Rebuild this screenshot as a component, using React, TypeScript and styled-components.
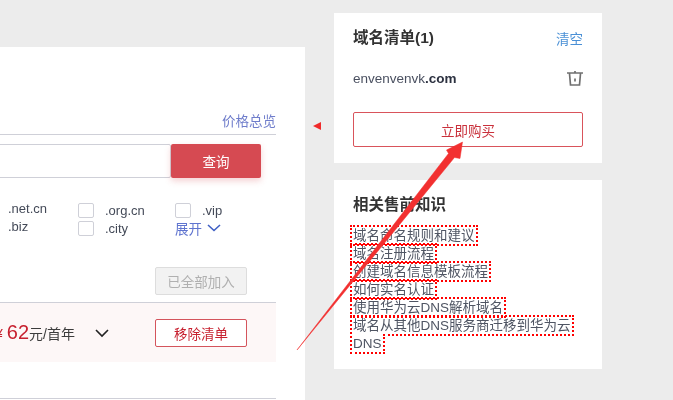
import React from "react";
import styled, { createGlobalStyle } from "styled-components";

const Global = createGlobalStyle`
  html, body { margin: 0; padding: 0; width: 673px; height: 400px; overflow: hidden; background: #ececec; }
  body { font-family: "Liberation Sans", "Noto Sans CJK SC", sans-serif; color: #333; }
`;

const Page = styled.div`
  position: relative;
  width: 673px;
  height: 400px;
  overflow: hidden;
  display: flex;
  align-items: flex-start;
  background: #ececec;
  filter: blur(0.4px);
`;

const MainPanel = styled.main`
  width: 305px;
  height: 353px;
  margin-top: 47px;
  padding: 65px 29px 0 0;
  box-sizing: border-box;
  background: #fff;
  overflow: hidden;
  flex: none;
`;

const PriceBar = styled.div`
  height: 22px;
  border-bottom: 1px solid #cfd0d8;
  display: flex;
  justify-content: flex-end;
  align-items: flex-start;
  font-size: 13.5px;
  line-height: 20px;
  color: #6f7dcb;
`;

const SearchRow = styled.div`
  display: flex;
  height: 34px;
  margin: 9px 15px 0 0;
`;

const SearchInput = styled.div`
  flex: 1;
  margin-left: -3px;
  box-sizing: border-box;
  background: #fff;
  border: 1px solid #cfd0d8;
  border-radius: 2px;
`;

const SearchButton = styled.button`
  width: 90px;
  border: 0;
  border-radius: 2px;
  background: #d64a52;
  color: #fff;
  font: inherit;
  font-size: 13.5px;
  padding: 0;
  box-shadow: 0 3px 6px rgba(214, 74, 82, 0.25);
`;

const TldGrid = styled.div`
  display: grid;
  grid-template-columns: 70px 97px 97px;
  grid-auto-rows: 18px;
  margin: 23px 0 0 8px;
  font-size: 13px;
  color: #444a58;
`;

const Tld = styled.label`
  display: flex;
  align-items: center;
  gap: 11px;
`;

const CheckBox = styled.span`
  width: 14px;
  height: 13px;
  flex: none;
  border: 1px solid #cfd0d8;
  border-radius: 2px;
  background: #fff;
`;

const Expand = styled.span`
  display: flex;
  align-items: center;
  gap: 5px;
  font-size: 13.5px;
  color: #5f74cf;
`;

const ActionRow = styled.div`
  display: flex;
  justify-content: flex-end;
  margin: 30px 29px 0 0;
`;

const Disabled = styled.button`
  width: 92px;
  height: 28px;
  padding: 0;
  box-sizing: border-box;
  border: 1px solid #ddd;
  border-radius: 2px;
  background: #f2f2f2;
  color: #b0b0b0;
  font: inherit;
  font-size: 13.5px;
`;

const ResultRow = styled.div`
  height: 60px;
  margin-top: 7px;
  box-sizing: border-box;
  border-top: 1px solid #cfd0d8;
  background: #fdf7f7;
  display: flex;
  justify-content: flex-end;
  align-items: center;
  padding-right: 29px;
`;

const Price = styled.span`
  display: flex;
  flex: none;
  align-items: baseline;
  margin-right: 20px;
  font-size: 14px;
  color: #3c3c3c;
  white-space: nowrap;
`;

const Currency = styled.span`
  margin-right: 4px;
  color: #c7202f;
`;

const Amount = styled.b`
  font-weight: 400;
  font-size: 20px;
  color: #c7202f;
`;

const Chevron = styled.svg`
  width: 14px;
  height: 10px;
  margin-right: 46px;
  flex: none;
`;

const Remove = styled.button`
  width: 92px;
  height: 28px;
  flex: none;
  padding: 0;
  box-sizing: border-box;
  border: 1px solid #d4545c;
  border-radius: 2px;
  background: #fff;
  color: #c7202f;
  font: inherit;
  font-size: 13.5px;
`;

const BottomLine = styled.div`
  height: 36px;
  border-bottom: 1px solid #cfd0d8;
`;

const Pointer = styled.div`
  width: 0;
  height: 0;
  flex: none;
  margin: 122px 0 0 8px;
  border-style: solid;
  border-width: 4px 8px 4px 0;
  border-color: transparent #f02a2a transparent transparent;
`;

const Side = styled.aside`
  width: 268px;
  flex: none;
  margin: 13px 0 0 13px;
  display: flex;
  flex-direction: column;
  gap: 17px;
`;

const Card = styled.section`
  background: #fff;
  padding: 16px 19px 0;
  box-sizing: border-box;
  height: ${(p: { $h: number }) => p.$h}px;
`;

const CardHead = styled.div`
  display: flex;
  justify-content: space-between;
  align-items: center;
  height: 18px;
`;

const Title = styled.h3`
  margin: 0;
  font-size: 15.5px;
  line-height: 18px;
  font-weight: 700;
  color: #333;
`;

const Clear = styled.span`
  font-size: 13.5px;
  color: #4a90d6;
`;

const ItemRow = styled.div`
  display: flex;
  justify-content: space-between;
  align-items: center;
  height: 18px;
  margin-top: 22px;
  font-size: 13.5px;
  color: #4a5060;
`;

const Tail = styled.b`
  font-weight: 700;
  color: #2c3140;
`;

const Buy = styled.button`
  display: block;
  width: 230px;
  height: 35px;
  margin-top: 25px;
  padding: 0;
  box-sizing: border-box;
  border: 1px solid #d9535b;
  border-radius: 2px;
  background: #fff;
  color: #c9303b;
  font: inherit;
  font-size: 13.5px;
`;

const Links = styled.div`
  margin-top: 13px;
  font-size: 13.5px;
  line-height: 18px;
  color: #4f5563;
`;

const DocLink = styled.a`
  outline: 2px dotted #f00;
  outline-offset: 1px;
`;

const Arrow = styled.svg`
  position: absolute;
  left: 0;
  top: 0;
  width: 673px;
  height: 400px;
  pointer-events: none;
`;

const links = [
  "域名命名规则和建议",
  "域名注册流程",
  "创建域名信息模板流程",
  "如何实名认证",
  "使用华为云DNS解析域名",
  "域名从其他DNS服务商迁移到华为云DNS",
];

export default function App() {
  return (
    <Page>
      <Global />
      <MainPanel>
        <PriceBar>价格总览</PriceBar>
        <SearchRow>
          <SearchInput />
          <SearchButton>查询</SearchButton>
        </SearchRow>
        <TldGrid>
          <span>.net.cn</span>
          <Tld><CheckBox />.org.cn</Tld>
          <Tld><CheckBox />.vip</Tld>
          <span>.biz</span>
          <Tld><CheckBox />.city</Tld>
          <Expand>
            展开
            <svg width="14" height="8" viewBox="0 0 14 8">
              <path d="M1 1l6 5.5L13 1" fill="none" stroke="#3f5fc4" strokeWidth="1.6" />
            </svg>
          </Expand>
        </TldGrid>
        <ActionRow>
          <Disabled>已全部加入</Disabled>
        </ActionRow>
        <ResultRow>
          <Price>
            <Currency>¥</Currency>
            <Amount>62</Amount>元/首年
          </Price>
          <Chevron viewBox="0 0 14 10">
            <path d="M1 2l6 6 6-6" fill="none" stroke="#222" strokeWidth="1.6" />
          </Chevron>
          <Remove>移除清单</Remove>
        </ResultRow>
        <BottomLine />
      </MainPanel>
      <Pointer />
      <Side>
        <Card $h={150}>
          <CardHead>
            <Title>域名清单(1)</Title>
            <Clear>清空</Clear>
          </CardHead>
          <ItemRow>
            <span>envenvenvk<Tail>.com</Tail></span>
            <svg width="16" height="16" viewBox="0 0 16 16">
              <path
                d="M0 3h16M8 1v2M2.5 3.5L3.5 15h9l1-11.5M8 8.5v3"
                fill="none"
                stroke="#707070"
                strokeWidth="1.7"
              />
            </svg>
          </ItemRow>
          <Buy>立即购买</Buy>
        </Card>
        <Card $h={189}>
          <Title>相关售前知识</Title>
          <Links>
            {links.map((l) => (
              <div key={l}>
                <DocLink>{l}</DocLink>
              </div>
            ))}
          </Links>
        </Card>
      </Side>
      <Arrow viewBox="0 0 673 400">
        <path
          d="M297 350L448.5 153.5L446.5 150L462.5 142L460 158.5L454.5 157.5Z"
          fill="#f23030"
          stroke="#f23030"
          strokeWidth="0.5"
        />
      </Arrow>
    </Page>
  );
}
